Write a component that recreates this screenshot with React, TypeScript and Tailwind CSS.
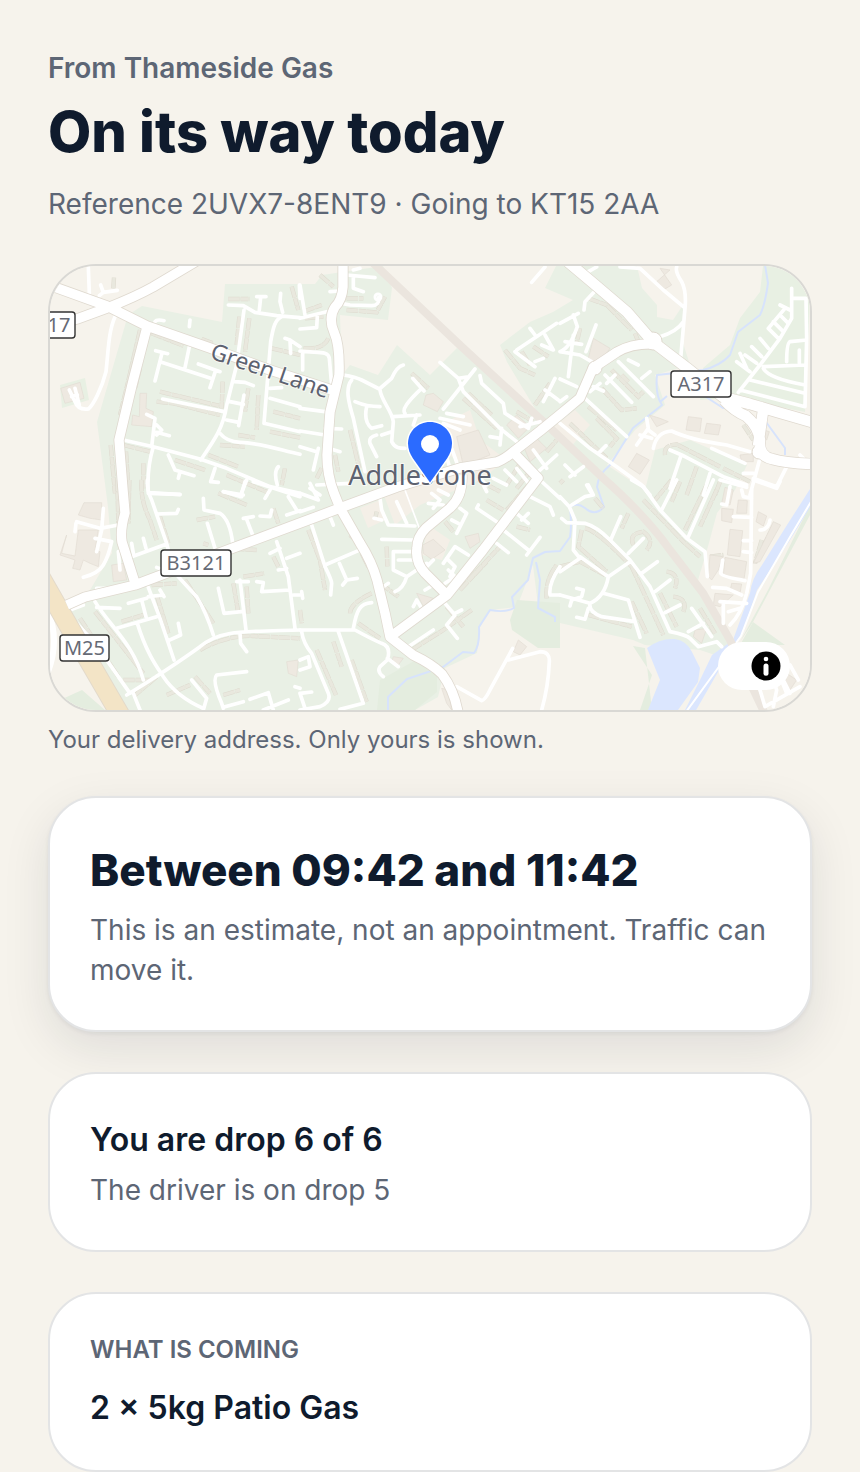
import React from 'react';

type Tile = { x: number; y: number; lanes: string; thin?: string; rows: string; blocks: string };

// Side streets, rows of houses and single buildings, three units to a pixel
const tiles: Tile[] = [
  {
    x: 40,
    y: 255,
    lanes:
      'M145 36L148 115M182 90L190 112L232 106M190 112L178 122M225 185C205 230 205 290 198 350C185 400 160 450 145 462C120 465 110 455 105 440L88 405M105 400L118 450M95 425L112 420M345 200Q350 192 372 197M450 195L448 215M448 275L435 338M347 287L383 296M365 298L345 378M365 322L512 370M475 327L540 350M525 352L510 398M368 432L552 470M565 150L610 152L645 172L710 182L780 188M650 125L678 125M662 128L658 165M722 115L720 140L728 172M725 185C705 195 700 215 692 260L685 345L672 505M612 165L590 330L560 450C550 520 520 560 482 615M583 380L615 382L640 392M570 440L610 448M612 420L596 512M560 495L596 502M690 400L725 398M690 430L780 455M672 505L780 530M540 535Q560 560 600 562C670 565 720 585 780 598M250 555L340 575L480 612L560 640L690 695L780 715M335 575L345 490L320 478M350 510L365 525L350 540M350 532L388 542M340 575Q320 640 325 715L420 718M385 600L405 645L462 662M420 650L415 670M525 640L512 680L535 682M715 635Q700 650 712 690M615 680L605 715M550 710L610 720M735 250L750 255L752 295M750 255L780 275M778 90L780 130',
    rows:
      'M222 68L220 100M565 132L628 132M755 95L775 165M335 235L430 272M300 225L262 390L240 480M598 185L590 270M628 190L615 290M695 280L780 300M485 252L520 265M360 410L548 455M350 440L400 445L540 480M300 340L285 400M548 380L545 460M625 400L615 470M655 420L650 525M700 470L780 490M690 530L780 548M540 570L615 575M595 540L645 548M250 570L330 590M310 625L310 700M505 600L595 635M560 660L690 715M212 570L225 715M735 640L725 690M405 615L495 645M258 590L265 700',
    blocks: 'M62 400L120 382L132 430L75 445ZM300 415L320 415L318 460L340 470L335 515L275 510L278 480L298 485Z',
  },
  {
    x: 300,
    y: 255,
    lanes:
      'M160 45L180 40M140 60L225 68M160 65L160 100L190 110M90 110L120 108M125 145L150 150L215 152Q240 150 236 128M0 190L80 170M0 90L15 180M52 185L50 218L0 222M0 288C50 295 85 285 88 310L95 390M8 295L8 345M0 460L75 470M0 528L75 540M0 575L50 590M55 580L40 645M75 520L125 522M85 580L120 590M130 360C160 365 175 370 185 375L238 402L275 370Q290 335 310 330M155 375C135 400 145 440 160 490L195 650M165 440Q200 455 240 455M240 405C245 440 275 465 280 500L275 560C285 580 300 580 315 580M200 455Q190 500 215 520L245 512M280 485L360 480M350 480L340 510M230 540Q205 545 210 565L230 605M245 540L275 530M338 370L372 408M365 400Q300 460 315 475M420 322L475 370L490 410L600 520L650 560M525 342L430 462M475 370L500 366M540 362L545 385L610 445L615 475L685 520M660 515L720 500M695 490L685 520M605 520L600 570M570 545L600 550M695 82L735 36M690 220L705 240M650 285L770 205M645 290L705 335M705 320L730 310M735 240L760 285L725 270M735 405L775 435M765 370L730 440M690 690L650 640M615 645L650 680M580 670L620 690M550 690L560 710M700 585L740 640M715 650L770 600M420 490L510 510M440 475L490 485M430 505L480 525M455 580L480 650M435 590L450 640M395 520L450 540M50 690L150 685M30 700L60 720',
    rows:
      'M60 60L100 95M140 165L230 172L255 125M140 130L190 130M10 170L65 150M15 190L70 185M10 280Q70 285 85 250M150 525L178 640M335 355L385 400M490 430L590 520M505 415L575 480M650 470L700 500M615 285L660 340L705 360M665 290L690 330M700 275L745 305M750 385L705 450M105 600L115 650M620 690L670 610M650 700L690 650M740 590L770 555M50 670L65 640',
    blocks:
      'M378 420L400 415L430 440L412 470L370 450ZM470 545L535 525L570 600L490 632ZM620 510L650 480L690 515L655 550ZM665 560L700 540L740 580L690 620Z',
  },
  {
    x: 560,
    y: 255,
    lanes:
      'M85 50L110 36M180 36L240 40L310 105L370 155M350 36Q345 50 365 80Q380 110 375 160L362 310M370 200Q350 230 300 245M0 205L55 175M40 180L52 215Q30 280 0 290M105 108L75 140L72 165M108 210L78 290M40 240L25 365M15 260L65 268M0 290L60 300L95 320M0 372L50 395M175 320L280 425M205 315L235 330M245 370L270 350M135 360L215 442M140 385L165 360M90 410L120 385M100 395L130 408M75 430L200 545M0 440L20 425M0 505L90 580L170 635L245 690L270 720M115 595L138 572M695 100L695 190L660 250L600 330L535 412M700 130L738 130L740 250L735 455L540 405M625 220L675 160M660 150L690 165M625 220L655 250M640 200L670 230M660 180L685 205M600 250L625 280M575 275L605 305M555 300L590 325M530 320L570 350M540 295L560 340M740 255L690 260Q680 265 680 320M718 285L718 325M610 335L735 330M610 340Q625 370 735 390M570 375L735 415M280 580Q290 530 335 528C380 550 430 560 500 570L570 590M455 580L555 625M260 490L265 520L230 570M240 540L275 550M265 525L285 540M330 585L365 600L490 665L560 690M362 605L330 700M450 655L430 720M600 610L570 720M550 655L580 655M580 670L650 695L685 625M15 630L45 660M70 635L30 665M80 690L95 715M720 600L730 610',
    rows:
      'M85 130L140 150L215 225M225 235L235 260M60 220L50 265M155 345L235 425L250 410M185 360L205 380M125 400L185 465L230 460M85 455L170 525M110 490L170 550L150 575M30 505L140 610M550 510L580 555M315 600Q310 570 350 568L480 635M490 640L570 680M410 635L380 720M480 680L465 720',
    blocks:
      'M100 250L150 280L115 330L85 310ZM290 80L330 45L300 40L335 90L310 105ZM385 485L425 490L420 530L378 525ZM440 505L482 510L475 540L433 535ZM230 595L268 615L240 658L205 635ZM268 480L300 490L325 500L290 515ZM612 525L628 530L620 555L608 550ZM540 600L580 595L580 620L545 620Z',
  },
  {
    x: 40,
    y: 480,
    lanes:
      'M322 0Q320 30 335 60L380 190L385 210M330 38L420 44M350 102L410 100L415 88M275 230L380 192M275 190L280 220M310 175L318 205M235 215L240 270M190 85L185 150L170 215M110 125L180 145L235 135M108 130L105 155M165 175L215 185Q205 230 190 255Q175 280 130 292M490 55L492 90L540 100Q570 120 578 190M502 130L525 205M610 115L640 110M620 118L638 165M660 108L690 110L695 90M675 55L690 30M600 50L620 0M550 35L605 50M640 5L780 50M745 50L770 90M740 105L780 92M710 185L745 290L765 445M690 220L720 205M715 270L740 265M650 305L670 308L665 335L750 330M760 345L780 345M780 220L740 235M350 262L370 270M415 290L470 350Q500 400 520 465M325 322L360 415L402 540M325 350L370 345M360 330L372 350M265 370L320 355M305 360L318 410M165 365C210 440 280 490 310 600M170 382L240 385M230 445L350 410M292 430C320 520 350 560 370 590Q410 650 490 685M415 430L422 465L385 482M260 645Q390 565 480 500C540 450 600 455 780 450M535 325L552 400L605 395M600 300L618 450M590 305L625 305M600 460L602 490L620 515M455 600L500 655L490 690M620 575L530 585Q515 600 545 670L550 685M555 680L610 665M630 658L685 638L700 690M670 690L745 660M765 620L780 625M165 490L270 640M110 430L165 490M280 640L300 690M90 390L130 375M170 325L200 325',
    rows:
      'M305 0Q300 60 330 120L350 180M360 110L385 190M232 0L235 130M268 0L265 130M535 40L620 75M470 120L525 110M555 205L650 210M700 85L715 130M490 190L505 195M610 290L672 280M580 310L595 400M620 320L625 400M335 315L410 310M435 300L520 430M350 345L385 460M245 425L310 405M165 395L310 580M120 415L235 590M250 600L340 600M480 510Q560 465 640 468L780 475M465 590L510 640M380 645L450 615M550 645L600 630M350 590L280 650M700 230L715 260',
    blocks:
      'M132 68L185 68L185 120L150 115L115 105ZM80 165L70 200L65 220L105 228L115 150L175 150L165 210L180 215L175 260L150 250L130 240L120 270L98 265L105 240L60 225ZM215 255L250 250L260 300L220 305ZM740 545L775 540L770 590L745 580Z',
  },
  {
    x: 300,
    y: 480,
    lanes:
      'M30 10L55 60L0 40M0 95L40 82M90 110L100 135M240 55L245 90L265 135L345 138M290 65L320 130M245 178L340 180M222 115L245 120M395 40L420 60L400 85M385 70L430 75M415 30L445 45M380 250L320 290L280 270L280 215L335 215M295 240L340 240M320 290Q310 325 285 335M250 320L265 310M340 380L350 360L365 385M375 330L400 315M435 310L465 290L445 270M400 240L375 265M430 250L465 200L505 225M440 235L465 260L450 290M35 135L75 260Q95 300 95 310L92 345M75 255L175 212M118 250L140 300L172 295M140 300L128 315M160 445C170 390 180 370 215 368M0 450L165 450Q220 480 245 490M245 490Q275 500 262 540L240 560Q230 575 250 590M262 535L295 560M325 500L400 450M435 370L465 405L440 435L472 475M465 400L485 390M535 75L530 85L590 125M480 85L500 100L470 160M455 120L475 130M610 150L685 210M680 225L720 172M590 190L625 218M650 100L685 130M665 120L685 100M690 50L750 80L760 105M720 0L780 55M545 0L560 15M5 455Q10 490 35 520L85 640Q95 665 60 680L0 690M0 540L25 530L30 560L0 570M0 640L35 636M115 455L190 670L120 688M0 640L15 685M5 335L8 355M470 620L545 662Q555 660 570 630L638 505M625 540L720 515Q750 515 748 545Q745 620 725 690M780 260Q745 310 750 345L780 345',
    thin: 'M315 30L360 150',
    rows:
      'M25 150L60 240L75 330M150 165L180 190M185 220L205 260M150 400Q150 370 215 340M175 430L240 475M50 510L108 645M100 485L125 560M155 540L200 665M335 510L430 450L515 390M280 460L350 400M440 380L490 440M535 0L600 35M560 60L610 90M620 90L690 10M505 300L600 200M480 330L560 245M435 125L460 155M650 140L690 150M740 355Q735 300 770 255M260 200L262 260M240 310L295 350M0 390L5 430M225 120L230 95',
    blocks:
      'M400 178L435 210L395 238L370 220L368 195ZM495 170L535 160L540 185L510 205ZM655 480L680 500L660 525L640 515ZM425 625L445 630L455 690L440 670ZM280 530L310 535L295 555L275 545ZM350 340L400 355L370 380Z',
  },
  {
    x: 560,
    y: 480,
    lanes:
      'M35 75L75 50L100 45L85 15M0 50L28 80L45 120L40 210L60 235M5 115L20 128L75 130Q110 140 150 180L210 240L270 320L330 455Q380 465 390 475L415 500L470 485L485 500M182 110L152 180M250 175L205 220M292 245L245 280M330 300L285 335M360 375L315 398M60 235L0 275M60 230L145 290L210 245M145 290Q135 350 90 370L0 345M130 340L205 360L240 472M90 370Q85 395 125 410L225 425M85 385L75 418L50 412M30 378L35 360L65 350L70 330L50 325M215 0L250 20L300 90L380 175L435 215L442 290M350 0L305 90M460 0L385 170M480 0L560 22M510 20L500 75L485 72M575 30L572 280L560 340Q545 400 510 435M545 30L550 50L575 55M520 110L575 112M550 182L575 182M550 215L575 218M488 240L482 280Q485 290 555 302M458 322L500 325L545 345M480 365L560 370M490 370L490 430M505 395L540 385M580 0L650 25L660 5M600 150Q625 150 630 120M395 385L455 470M430 430L385 455M640 600L650 630L640 680M690 555L715 600M600 630L615 680L720 620M670 600L690 640M660 590L680 640',
    rows:
      'M0 260L60 245L135 285M65 150L55 200L140 275M75 145Q110 150 215 260L310 465M105 55L130 85M205 100L185 145M220 195Q205 160 250 155Q285 180 260 210M320 275Q360 280 345 325M340 350Q385 355 370 395M85 405L215 440M215 365L260 460M300 340L350 440M250 60L370 185L420 230M335 0L285 60M360 5L335 65M440 15L375 150M470 30L420 140M420 385L465 460M450 230L490 225M605 180L585 250M640 140L600 220M0 10L10 0',
    blocks:
      'M495 22L520 30L510 75L485 70ZM535 60L562 62L560 100L530 100ZM485 85L520 88L515 128L485 122ZM510 148L548 152L540 230L502 225ZM595 95L620 108L610 138L588 125ZM640 125L662 135L600 245L580 250ZM450 225L488 230L475 270L455 300L445 290ZM495 232L560 245L552 298L490 288ZM515 310L545 312L540 340L510 335ZM465 340L520 345L480 380L460 375ZM405 450L440 445L425 490L400 470ZM680 580L710 600L690 630L675 610Z',
  },
];

const mainRoads = [
  'M46 284L107 306L147 326L210 348L270 370L332 390',
  'M50 327L77 319L107 308Q135 297 153 287L200 259',
  'M147 327L132 385L119 440L123 490L125 513Q120 530 122 542L135 583',
  'M67 605L85 597L135 585L180 568L233 548L300 523L340 508L397 487L460 468L497 462Q505 459 513 452L540 431L562 413L580 398L593 368L617 352Q632 343 655 344',
  'M343 262V287Q342 300 335 307Q328 318 334 332Q340 345 339 375L330 412L327 455Q327 475 334 493L340 508L360 543Q372 562 377 580L385 613L390 637L413 655Q432 664 442 674Q454 690 458 712',
  'M390 637L447 595L483 550L538 478L513 452',
  'M447 595L425 573Q415 562 417 548Q417 537 426 528L450 508Q463 496 462 475',
];

const trunkRoads = [
  'M568 262L593 283L627 312L653 342L687 368L723 397L750 404L777 412L815 423',
  'M724 400Q734 411 746 416Q758 426 760 440Q758 456 772 459Q785 463 812 464',
  'M763 411L758 446',
];

const Shield: React.FC<{ x: number; y: number; width: number; label: string }> = ({ x, y, width, label }) => (
  <g>
    <rect x={x} y={y} width={width} height={26} rx={3} fill="#fff" stroke="#333" strokeWidth={1.4} />
    <text x={x + width / 2} y={y + 20} textAnchor="middle" fontSize={20} fill="#666a75">
      {label}
    </text>
  </g>
);

const AreaMap: React.FC = () => (
  <svg
    role="img"
    aria-label="Map of Addlestone"
    viewBox="50 266 760 444"
    preserveAspectRatio="xMidYMid slice"
    className="block h-full w-full font-['Noto_Sans',sans-serif]"
  >
    <rect x="50" y="266" width="760" height="444" fill="#f6f3ec" />

    {/* neighbourhoods and parks */}
    <path
      d="M128 315L142 306L222 322L225 284L315 284L322 275L383 266L392 288L388 320L340 315L342 375L350 365L378 375L397 345L430 375L457 348L537 412L507 362L500 345L530 322L553 312L573 300L545 288L556 266H637L642 288L657 305V317L673 320L683 305L682 340L690 365L655 375L665 405L635 430L607 465L645 490L655 450L690 440L747 465L735 490L717 513L707 550L698 580L733 640L715 655L700 650L645 645L633 640L560 623L538 605L533 565L517 607L490 610L480 627L477 653L445 668L438 697L415 710H128L65 608L90 590L112 553L108 507L97 422Z"
      fill="#e9f0e5"
    />
    <path d="M763 266L760 292L740 318L730 345L703 368L700 400L735 398L805 412L810 300L790 266ZM60 385L85 378L89 400L62 408Z" fill="#e8f0e3" />
    <path d="M510 620L517 600L560 603V648H538L512 630ZM377 710L380 680L425 655L437 672V692L415 710ZM60 700L82 690L105 710H70ZM753 622L785 645L740 645Z" fill="#e4eddf" />
    <path d="M645 648L633 646L652 675L640 710H652ZM810 505L768 590L740 642L753 622L810 515Z" fill="#e4eddf" />
    <path d="M382 490L415 480L470 460L500 465L480 480L420 505L395 525ZM430 430L470 410L480 440L500 455L465 465L440 450ZM550 430L575 410L590 425L568 450ZM360 508L380 500L385 520L368 528ZM428 525L450 540L442 560L422 555Z" fill="#f4efe7" />

    {/* water */}
    <path d="M647 648Q660 638 675 639Q687 641 692 652L700 668L698 682L678 710H648L660 680ZM812 486L787 525L762 565Q752 578 750 593L733 640L712 655L700 680L684 712L695 712L718 672L742 635L757 590L790 540L812 504Z" fill="#dbe6fe" />
    <path
      d="M765 265L768 283Q765 305 760 315L738 332L730 355Q720 366 703 370L657 375Q655 395 662 405L633 428L610 465Q598 475 597 487L604 507Q595 517 585 508Q577 502 570 507Q572 525 570 537L560 551L545 552L533 558Q530 570 528 580L512 597L514 608Q505 613 490 610L479 627Q480 645 474 653L463 652L443 667L407 679L388 697V712M536 562L540 580L538 608L555 617V622M703 395L723 408L745 409M766 422L785 448V455M660 402L667 396"
      fill="none"
      stroke="#d7e3fc"
      strokeWidth="2"
      strokeLinejoin="round"
    />
    <path d="M812 500L790 537L758 592L741 636L718 668L686 712" fill="none" stroke="#fff" strokeWidth="2" />

    {tiles.map((tile) => (
      <g key={`${tile.x}-${tile.y}`} transform={`translate(${tile.x} ${tile.y}) scale(0.33333)`} fill="none">
        <path d={tile.rows} stroke="#dedacf" strokeWidth="13" strokeDasharray="34 3 22 2" />
        <path d={tile.rows} stroke="#e9e8de" strokeWidth="10" strokeDasharray="34 3 22 2" />
        <path d={tile.blocks} fill="#eee9e1" stroke="#e2dcd3" strokeWidth="2" />
      </g>
    ))}

    <path d="M372 262L463 348L547 425L603 478Q645 515 670 550L703 593L730 640L764 712" fill="none" stroke="#ebe5de" strokeWidth="8" />

    {tiles.map((tile) => (
      <g
        key={`${tile.x}-${tile.y}`}
        transform={`translate(${tile.x} ${tile.y}) scale(0.33333)`}
        fill="none"
        stroke="#fff"
        strokeLinecap="round"
        strokeLinejoin="round"
      >
        <path d={tile.lanes} strokeWidth="11" />
        {tile.thin && <path d={tile.thin} strokeWidth="5" />}
      </g>
    ))}
    <circle cx="378" cy="297" r="3" fill="none" stroke="#fff" strokeWidth="3" />

    {/* motorway, then main roads with their casing */}
    <path d="M48 612Q60 640 48 672" fill="none" stroke="#fff" strokeWidth="6" />
    <path d="M40 576L75 637L122 718" fill="none" stroke="#e3dacb" strokeWidth="20" />
    <path d="M40 576L75 637L122 718" fill="none" stroke="#f3e4c6" strokeWidth="18" />
    <g fill="none" strokeLinejoin="round">
      <path d={mainRoads.join('')} stroke="#dfd9cf" strokeWidth="11" />
      <path d={trunkRoads.join('')} stroke="#dfd9cf" strokeWidth="12" />
      <circle cx="595" cy="368" r="7" fill="#fff" stroke="#dfd9cf" strokeWidth="1" />
      <circle cx="653" cy="341" r="9" fill="#fff" stroke="#dfd9cf" strokeWidth="1" />
      <circle cx="759" cy="452" r="7" fill="#fff" stroke="#dfd9cf" strokeWidth="1" />
      <path d={mainRoads.join('')} stroke="#fff" strokeWidth="9.4" />
      <path d={trunkRoads.join('')} stroke="#fff" strokeWidth="10.6" />
    </g>

    <g stroke="#fff" strokeOpacity="0.6" strokeWidth="2" paintOrder="stroke" fill="#5d6270">
      <text x="420" y="485" textAnchor="middle" fontSize="27">
        Addlestone
      </text>
      <text transform="translate(209 358) rotate(19)" fontSize="23">
        Green Lane
      </text>
    </g>

    <Shield x={43} y={312} width={32} label="17" />
    <Shield x={671} y={371} width={60} label="A317" />
    <Shield x={161} y={550} width={70} label="B3121" />
    <Shield x={60} y={635} width={49} label="M25" />

    {/* delivery pin */}
    <path
      d="M430 422C417.600 422 408 431.600 408 443.500C408 449 410 454 413 458.500L430 482.500L447 458.500C450 454 452 449 452 443.500C452 431.600 442.400 422 430 422Z"
      fill="#2b6bff"
      stroke="#fff"
      strokeWidth="3"
      paintOrder="stroke"
    />
    <circle cx="430" cy="444" r="9" fill="#fff" />
  </svg>
);

const Card: React.FC<{ raised?: boolean; children: React.ReactNode }> = ({ raised, children }) => (
  <section
    className={`rounded-[48px] border-2 border-[#e3e4e5] bg-white px-10 pt-[42px] pb-10 ${
      raised ? 'shadow-[0_2px_4px_rgba(15,27,45,0.06),0_16px_48px_rgba(15,27,45,0.10)]' : ''
    }`}
  >
    {children}
  </section>
);

const App: React.FC = () => {
  return (
    <main className="min-h-screen bg-[#f6f3ec] px-12 pt-12 font-[Inter,sans-serif] text-[28px] leading-10 text-[#5d6675]">
      <header>
        <p className="font-semibold">From Thameside Gas</p>
        <h1 className="mt-2 text-[56px] leading-[72px] font-extrabold text-[#0f1b2d]">On its way today</h1>
        <p className="mt-4">Reference 2UVX7-8ENT9 · Going to KT15 2AA</p>
      </header>

      <figure className="mt-10">
        <div className="relative h-[448px] overflow-hidden rounded-[48px] border-2 border-[#d9d8d4]">
          <AreaMap />
          <button
            type="button"
            aria-label="Toggle attribution"
            className="absolute right-5 bottom-5 flex h-12 w-[72px] items-center justify-end rounded-full bg-white pr-2"
          >
            <svg viewBox="0 0 32 32" className="size-8">
              <circle cx="16" cy="16" r="14.500" fill="#000" />
              <circle cx="16" cy="9" r="2.300" fill="#fff" />
              <path d="M16 16V23.200" stroke="#fff" strokeWidth="5" strokeLinecap="round" />
            </svg>
          </button>
        </div>
        <figcaption className="mt-3 text-2xl leading-8">Your delivery address. Only yours is shown.</figcaption>
      </figure>

      <div className="mt-10 flex flex-col gap-10">
        <Card raised>
          <h2 className="text-[44px] leading-[60px] font-extrabold text-[#0f1b2d]">Between 09:42 and 11:42</h2>
          <p className="mt-[10px]">This is an estimate, not an appointment. Traffic can move it.</p>
        </Card>
        <Card>
          <h2 className="text-[32px] leading-[48px] font-semibold text-[#0f1b2d]">You are drop 6 of 6</h2>
          <p className="mt-[6px]">The driver is on drop 5</p>
        </Card>
        <Card>
          <h2 className="text-2xl leading-7 font-semibold uppercase">What is coming</h2>
          <p className="mt-[22px] text-[32px] leading-[44px] font-semibold text-[#0f1b2d]">2 × 5kg Patio Gas</p>
        </Card>
      </div>
    </main>
  );
};

export default App;
